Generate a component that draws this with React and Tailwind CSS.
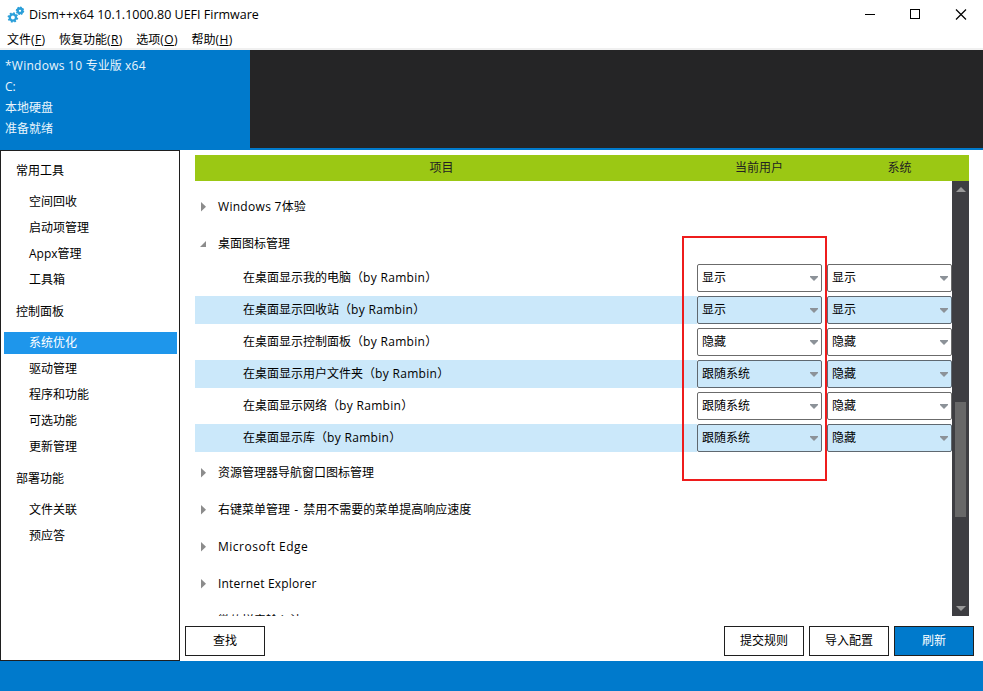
import React from 'react';

const sidebarGroups = [
  { title: '常用工具', items: ['空间回收', '启动项管理', 'Appx管理', '工具箱'] },
  { title: '控制面板', items: ['系统优化', '驱动管理', '程序和功能', '可选功能', '更新管理'] },
  { title: '部署功能', items: ['文件关联', '预应答'] },
];

const menus = [
  { label: '文件', hotkey: 'F' },
  { label: '恢复功能', hotkey: 'R' },
  { label: '选项', hotkey: 'O' },
  { label: '帮助', hotkey: 'H' },
];

const desktopIcons = [
  { name: '在桌面显示我的电脑', user: '显示', system: '显示' },
  { name: '在桌面显示回收站', user: '显示', system: '显示' },
  { name: '在桌面显示控制面板', user: '隐藏', system: '隐藏' },
  { name: '在桌面显示用户文件夹', user: '跟随系统', system: '隐藏' },
  { name: '在桌面显示网络', user: '跟随系统', system: '隐藏' },
  { name: '在桌面显示库', user: '跟随系统', system: '隐藏' },
];

const Gear = ({ cx, cy, r, tooth }) => (
  <g transform={`translate(${cx} ${cy})`} stroke="#2b9fd9" fill="none">
    <circle r={r} strokeWidth="2.3" />
    {[0, 45, 90, 135, 180, 225, 270, 315].map((deg) => (
      <path key={deg} d={`M0 ${-r - 0.5}V${-r - tooth}`} strokeWidth="1.9" transform={`rotate(${deg + 15})`} />
    ))}
  </g>
);

function TitleBar() {
  return (
    <div className="flex h-[30px] items-center pl-[7px]">
      <svg className="h-[18px] w-[18px]" viewBox="0 0 18 18">
        <Gear cx={5.9} cy={11.5} r={3.1} tooth={2.2} />
        <Gear cx={13} cy={4.8} r={2.3} tooth={1.9} />
      </svg>
      <span className="ml-1 grow text-[12.5px]">Dism++x64 10.1.1000.80 UEFI Firmware</span>
      <svg className="h-[30px] w-[138px]" viewBox="0 0 138 30" fill="none" stroke="#000" shapeRendering="crispEdges">
        <path d="M20 14.5h10" />
        <path d="M65.5 9.5h9v9h-9z" />
        <path d="M111 9.5l10 10M121 9.5l-10 10" strokeWidth="1.2" shapeRendering="auto" />
      </svg>
    </div>
  );
}

function MenuBar() {
  return (
    <div className="flex h-5 items-center gap-[13.5px] border-b-2 border-[#f0f0f0] pt-[2px] pl-[7px]">
      {menus.map((menu) => (
        <span key={menu.hotkey} className="whitespace-nowrap">
          {menu.label}
          <span className="tracking-[0.4px]">
            (<span className="underline">{menu.hotkey}</span>)
          </span>
        </span>
      ))}
    </div>
  );
}

function Sidebar() {
  return (
    <div className="w-[180px] shrink-0 border border-[#1f1f1f]">
      {sidebarGroups.map((group) => (
        <div key={group.title}>
          <div className="h-[37px] pl-[15px] leading-[40px]">{group.title}</div>
          {group.items.map((item) => (
            <div key={item} className="h-[26px] pt-[3px] pr-[2px] pl-[3px]">
              <div
                className={
                  item === '系统优化'
                    ? 'h-[22px] bg-[#1e96eb] pl-[25px] leading-[21px] text-white'
                    : 'h-[22px] pl-[25px] leading-[21px]'
                }
              >
                {item}
              </div>
            </div>
          ))}
        </div>
      ))}
    </div>
  );
}

function TreeGroup({ children, open }) {
  return (
    <div className="flex h-[37px] items-center pl-[5px]">
      <svg className="h-[10px] w-[18px]" viewBox="0 0 18 10" fill="#8c8c8c">
        {open ? <path d="M0 8h6v-6z" /> : <path d="M1 0v9.5l5-4.75z" />}
      </svg>
      <span>{children}</span>
    </div>
  );
}

function Combo({ value, striped }) {
  return (
    <div
      className={
        striped
          ? 'flex h-7 w-[125px] items-center justify-between rounded-[2px] border border-[#5f6870] bg-[#cbe8fa] pr-[3px] pl-1'
          : 'flex h-7 w-[125px] items-center justify-between rounded-[2px] border border-[#6b6b6b] bg-white pr-[3px] pl-1'
      }
    >
      <span>{value}</span>
      <svg className="mt-px h-[5px] w-2" viewBox="0 0 8 5" fill="#8c9298">
        <path d="M0 0h8v1l-4 4-4-4z" />
      </svg>
    </div>
  );
}

function ScrollBar() {
  return (
    <div className="flex w-[17px] shrink-0 flex-col items-center bg-[#3e3e42] pt-[6px] pb-[5px]">
      <svg className="h-[5px] w-[10px]" viewBox="0 0 10 5" fill="#999">
        <path d="M0 5l5-5 5 5z" />
      </svg>
      <div className="mt-[210px] h-[115px] w-[11px] bg-[#686868]" />
      <svg className="mt-auto h-[5px] w-[10px]" viewBox="0 0 10 5" fill="#999">
        <path d="M0 0l5 5 5-5z" />
      </svg>
    </div>
  );
}

function Button({ children, primary }) {
  return (
    <button
      className={
        primary
          ? 'h-[30px] w-20 border border-[#1f1f1f] bg-[#007acc] text-white'
          : 'h-[30px] w-20 border border-[#1f1f1f] bg-white'
      }
    >
      {children}
    </button>
  );
}

function App() {
  return (
    <div className="relative flex h-[691px] w-[983px] flex-col overflow-hidden bg-white font-['Open_Sans','Noto_Sans_CJK_SC',sans-serif] text-[12px] leading-5 text-black">
      <TitleBar />
      <MenuBar />
      <div className="flex h-[100px] shrink-0 border-b-2 border-[#007acc] bg-[#252526]">
        <div className="w-[250px] bg-[#007acc] pt-[5px] pl-[5px] leading-[21px] text-[#eaf5fc]">
          <p>
            <span className="tracking-[0.25px]">*Windows 10 </span>专业版<span className="tracking-[0.25px]"> x64</span>
          </p>
          <p>C:</p>
          <p>本地硬盘</p>
          <p>准备就绪</p>
        </div>
      </div>
      <div className="flex h-[511px] shrink-0">
        <Sidebar />
        <div className="flex grow flex-col pt-[5px]">
          <div className="mr-[14px] ml-[15px] flex h-[26px] items-center bg-[#9bc814] text-center text-[#222]">
            <span className="w-[493px]">项目</span>
            <span className="w-[142px]">当前用户</span>
            <span className="w-[139px]">系统</span>
          </div>
          <div className="mr-[14px] ml-[15px] flex h-[435px]">
            <div className="grow overflow-hidden pt-[7px]">
              <TreeGroup>
                <span className="tracking-[0.3px]">Windows 7</span>体验
              </TreeGroup>
              <TreeGroup open>桌面图标管理</TreeGroup>
              {desktopIcons.map((row, index) => (
                <div key={row.name} className="flex h-8 items-center">
                  <div
                    className={
                      index % 2 === 1
                        ? 'h-7 w-[502px] bg-[#cbe8fa] pl-12 leading-7'
                        : 'h-7 w-[502px] pl-12 leading-7'
                    }
                  >
                    {row.name}（<span className="tracking-[0.32px]">by Rambin</span>）
                  </div>
                  <div className="flex gap-[5px]">
                    <Combo value={row.user} striped={index % 2 === 1} />
                    <Combo value={row.system} striped={index % 2 === 1} />
                  </div>
                </div>
              ))}
              <TreeGroup>资源管理器导航窗口图标管理</TreeGroup>
              <TreeGroup>
                右键菜单管理<span className="tracking-[1px]"> - </span>禁用不需要的菜单提高响应速度
              </TreeGroup>
              <TreeGroup>
                <span className="tracking-[0.5px]">Microsoft Edge</span>
              </TreeGroup>
              <TreeGroup>
                <span className="tracking-[0.2px]">Internet Explorer</span>
              </TreeGroup>
              <TreeGroup>微软拼音输入法</TreeGroup>
            </div>
            <ScrollBar />
          </div>
          <div className="mt-[10px] flex gap-[5px] pr-[9px] pl-[5px]">
            <Button>查找</Button>
            <div className="grow" />
            <Button>提交规则</Button>
            <Button>导入配置</Button>
            <Button primary>刷新</Button>
          </div>
        </div>
      </div>
      <div className="grow bg-[#007acc]" />
      {/* highlight around the current user column */}
      <div className="absolute top-[236px] left-[682px] h-[245px] w-[145px] border-2 border-[#ee1c1c]" />
    </div>
  );
}

export default App;
